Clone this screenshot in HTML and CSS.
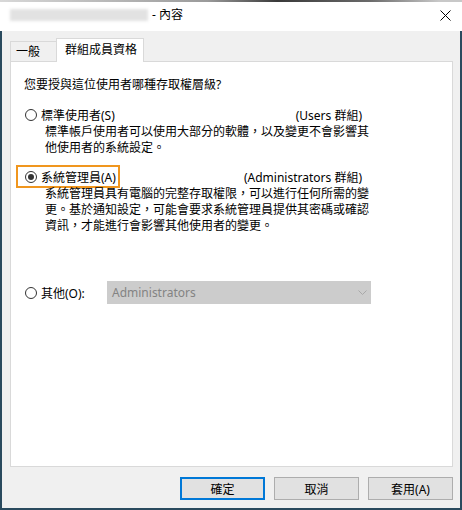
FILE: index.html
```html
<!DOCTYPE html>
<html lang="zh-Hant">
<head>
  <meta charset="UTF-8" />
  <title>內容</title>
  <link rel="stylesheet" href="styles.css">
</head>
<body>

  <div class="window">
    <div class="topstrip"></div>

    <!-- TITLE BAR -->
    <div class="titlebar">
      <span class="blurname"></span>
      <span class="title-text">- 內容</span>
      <span class="close">
        <svg width="11" height="11" viewBox="0 0 11 11">
          <path d="M0.5 0.5 L10.5 10.5 M10.5 0.5 L0.5 10.5" stroke="#000" stroke-width="1" fill="none"/>
        </svg>
      </span>
    </div>

    <div class="frame">
      <div class="tabs">
        <div class="tab">一般</div>
        <div class="tab active">群組成員資格</div>
      </div>

      <div class="panel">
        <p class="question">您要授與這位使用者哪種存取權層級?</p>

        <div class="option">
          <div class="option-row">
            <label class="radio"><span class="circle"></span>標準使用者(S)</label>
            <span class="group">(Users 群組)</span>
          </div>
          <p class="desc">標準帳戶使用者可以使用大部分的軟體，以及變更不會影響其<br>他使用者的系統設定。</p>
        </div>

        <div class="option second">
          <div class="option-row">
            <label class="radio focused"><span class="circle checked"></span>系統管理員(A)</label>
            <span class="group">(Administrators 群組)</span>
          </div>
          <p class="desc">系統管理員具有電腦的完整存取權限，可以進行任何所需的變<br>更。基於通知設定，可能會要求系統管理員提供其密碼或確認<br>資訊，才能進行會影響其他使用者的變更。</p>
        </div>

        <div class="option other">
          <label class="radio"><span class="circle"></span>其他(O):</label>
          <div class="select">
            <span>Administrators</span>
            <svg width="9" height="5" viewBox="0 0 9 5">
              <path d="M0.5 0.5 L4.5 4.5 L8.5 0.5" stroke="#a8a8a8" stroke-width="1" fill="none"/>
            </svg>
          </div>
        </div>
      </div>

      <div class="buttons">
        <button class="default">確定</button>
        <button>取消</button>
        <button>套用(A)</button>
      </div>
    </div>
  </div>

</body>
</html>
```

FILE: styles.css
```css
* {
  box-sizing: border-box;
}

body {
  margin: 0;
  font-family: "Noto Sans", "Noto Sans CJK TC", sans-serif;
  font-size: 12px;
  color: #000;
  background: #f0f0f0;
}

.window {
  width: 462px;
  height: 510px;
  display: flex;
  flex-direction: column;
}

.topstrip {
  height: 2px;
  background: linear-gradient(90deg, #d8d8d8 0%, #9a9a9a 45%, #3a3a3a 60%, #6a6a6a 80%, #c8c8c8 95%);
}

/* TITLE BAR */
.titlebar {
  height: 29px;
  background: #fff;
  display: flex;
  align-items: center;
  padding: 0 11px 3px 10px;
}

.blurname {
  width: 138px;
  height: 12px;
  background: #e2e2e2;
  filter: blur(1.5px);
}

.title-text {
  margin-left: 4px;
  line-height: 16px;
}

.close {
  margin-left: auto;
  display: flex;
}

/* WINDOW BODY */
.frame {
  flex: 1;
  display: flex;
  flex-direction: column;
  background: #f0f0f0;
  border: 2px solid #2a4a5e;
  border-top: 0;
  padding: 0 7px 0 8px;
}

.tabs {
  display: flex;
  align-items: flex-start;
  padding-top: 7px;
  margin-bottom: -1px;
}

.tab {
  width: 46px;
  height: 20px;
  margin-top: 3px;
  padding: 1px 0 0 5px;
  line-height: 18px;
  border: 1px solid #d9d9d9;
  border-right: 0;
  border-bottom: 0;
  white-space: nowrap;
}

.tab.active {
  width: 88px;
  height: 24px;
  margin-top: 0;
  padding: 0 0 0 8px;
  line-height: 22px;
  background: #fff;
  border-right: 1px solid #d9d9d9;
  position: relative;
  z-index: 1;
}

.panel {
  height: 406px;
  background: #fff;
  border: 1px solid #d9d9d9;
  padding: 15px 0 0 5px;
}

.question {
  margin: 0 0 10px 8px;
  line-height: 16px;
}

.option-row {
  width: 346px;
  display: flex;
  justify-content: space-between;
  align-items: center;
}

.radio {
  display: flex;
  align-items: center;
  gap: 4px;
  height: 23px;
  padding: 0 2px 0 7px;
  border: 2px solid transparent;
  white-space: nowrap;
}

.radio.focused {
  border-color: #f0961e;
}

.circle {
  width: 12px;
  height: 12px;
  border: 1px solid #333;
  border-radius: 50%;
  display: flex;
  align-items: center;
  justify-content: center;
}

.circle.checked::after {
  content: "";
  width: 6px;
  height: 6px;
  border-radius: 50%;
  background: #333;
}

.desc {
  margin: -2px 0 0 29px;
  line-height: 16px;
  white-space: nowrap;
}

.option.second {
  margin-top: 9px;
}

.option.other {
  margin-top: 47px;
  display: grid;
  grid-template-columns: 91px 264px;
  align-items: center;
}

.option.other .radio {
  justify-self: start;
}

.select {
  height: 23px;
  background: #cccccc;
  color: #838383;
  display: flex;
  align-items: center;
  justify-content: space-between;
  padding: 0 4px 0 5px;
}

/* DIALOG BUTTONS */
.buttons {
  display: flex;
  justify-content: flex-end;
  gap: 9px;
  margin-top: 10px;
}

button {
  width: 85px;
  height: 23px;
  padding: 0;
  font-family: inherit;
  font-size: 12px;
  color: #000;
  background: #e1e1e1;
  border: 1px solid #adadad;
}

button.default {
  border: 2px solid #0078d7;
}
```
